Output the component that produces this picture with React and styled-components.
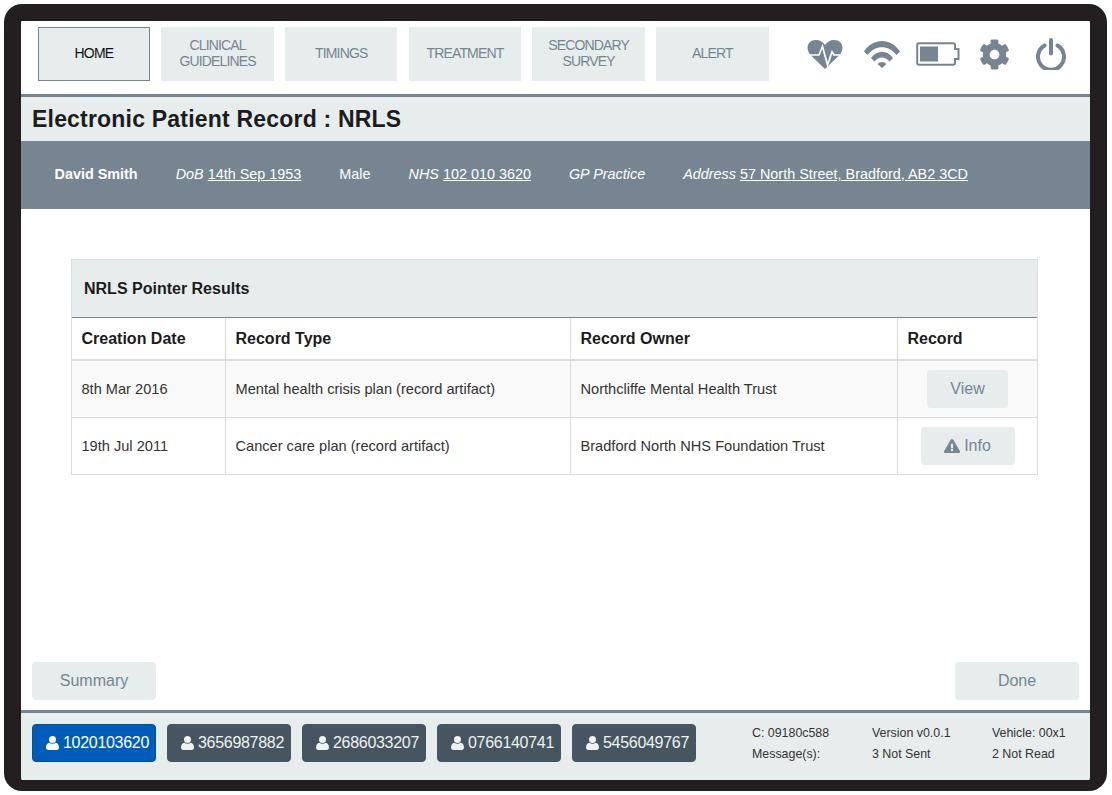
import React from 'react';
import styled, {createGlobalStyle} from 'styled-components';
import {FaCog, FaExclamationTriangle} from 'react-icons/fa';

const GlobalStyle = createGlobalStyle`
  html, body {
    margin: 0;
    padding: 0;
    background: #fff;
    font-family: "Liberation Sans", Arial, sans-serif;
  }
`;

const SLATE = '#768591';
const PALE = '#e7eded';

const Page = styled.div`
  padding: 4px 5px 4px 4px;
  width: 1103px;
  height: 787px;
`;

const Frame = styled.div`
  box-sizing: border-box;
  width: 1103px;
  height: 787px;
  border: 17px solid #231f20;
  border-bottom-width: 11px;
  border-radius: 18px;
  display: flex;
  flex-direction: column;
  background: #fff;
  overflow: hidden;
`;

const TopBar = styled.div`
  height: 73px;
  flex: none;
  display: flex;
  justify-content: space-between;
  padding: 6px 11px 0 16.7px;
  box-sizing: border-box;
`;

const Nav = styled.div`
  display: flex;
  gap: 11.3px;
`;

const NavItem = styled.div`
  box-sizing: border-box;
  width: 112.4px;
  height: 54px;
  padding-bottom: 2px;
  background: ${PALE};
  border: ${p => (p.$active ? `1px solid ${SLATE}` : 'none')};
  color: ${p => (p.$active ? '#111' : SLATE)};
  font-size: 14px;
  letter-spacing: -0.85px;
  line-height: 16px;
  text-align: center;
  display: flex;
  align-items: center;
  justify-content: center;
`;

const StatusIcons = styled.div`
  display: flex;
  align-items: center;
  height: 54px;
  color: ${SLATE};
`;

const IconSlot = styled.div`
  width: ${p => p.$w}px;
  display: flex;
  justify-content: center;
  align-items: center;
`;

const TitleBar = styled.div`
  flex: none;
  height: 47px;
  box-sizing: border-box;
  border-top: 3px solid ${SLATE};
  background: ${PALE};
  padding-left: 11px;
  display: flex;
  align-items: center;
`;

const Title = styled.h1`
  margin: 0;
  font-size: 23px;
  font-weight: 700;
  letter-spacing: 0.2px;
  color: #1c1c1c;
`;

const PatientBar = styled.div`
  flex: none;
  height: 68px;
  padding-bottom: 2px;
  box-sizing: border-box;
  background: ${SLATE};
  color: #fff;
  font-size: 14.4px;
  display: flex;
  align-items: center;
  gap: 38px;
  padding-left: 33.5px;

  em {
    font-style: italic;
  }

  u {
    text-decoration: underline;
  }

  strong {
    font-weight: 700;
  }
`;

const Content = styled.div`
  flex: 1;
  min-height: 0;
  display: flex;
  flex-direction: column;
  padding: 50px 11px 10px 11px;
`;

const Panel = styled.div`
  margin: 0 41px 0 39px;
  width: 967px;
  box-sizing: border-box;
  border: 1px solid #ddd;
`;

const PanelHead = styled.div`
  height: 58px;
  background: ${PALE};
  border-bottom: 1px solid ${SLATE};
  box-sizing: border-box;
  padding-left: 12px;
  display: flex;
  align-items: center;
  font-size: 16px;
  font-weight: 700;
  color: #1c1c1c;
`;

const Row = styled.div`
  display: grid;
  grid-template-columns: 153px 345px 327px 1fr;
  height: ${p => (p.$head ? '43px' : p.$last ? '56px' : '57px')};
  box-sizing: border-box;
  background: ${p => (p.$shade ? '#f9f9f9' : '#fff')};
  border-bottom: ${p => (p.$head ? '2px solid #ddd' : p.$last ? 'none' : '1px solid #ddd')};
  font-size: ${p => (p.$head ? '16px' : '14.6px')};
  font-weight: ${p => (p.$head ? 700 : 400)};
  color: ${p => (p.$head ? '#1c1c1c' : '#333')};
`;

const Cell = styled.div`
  display: flex;
  align-items: center;
  padding-left: 9.5px;
  border-left: ${p => (p.$first ? 'none' : '1px solid #ddd')};
`;

const ActionCell = styled(Cell)`
  padding-left: 0;
  justify-content: center;
`;

const SoftButton = styled.button`
  box-sizing: border-box;
  height: 38px;
  width: ${p => p.$w}px;
  border: none;
  border-radius: 4px;
  background: ${PALE};
  color: ${SLATE};
  font-family: inherit;
  font-size: 16px;
  display: inline-flex;
  align-items: center;
  justify-content: center;
  gap: 4px;
  padding: 0;
`;

const BottomActions = styled.div`
  margin-top: auto;
  display: flex;
  justify-content: space-between;
`;

const Footer = styled.div`
  flex: none;
  height: 70px;
  box-sizing: border-box;
  border-top: 3px solid ${SLATE};
  background: ${PALE};
  padding: 11px 0 0 11px;
  display: flex;
`;

const Patients = styled.div`
  display: flex;
  gap: 11px;
`;

const PatientButton = styled.button`
  box-sizing: border-box;
  width: 124px;
  height: 38px;
  border-radius: 4px;
  border: 1px solid ${p => (p.$active ? '#004f9e' : '#46555f')};
  background: ${p => (p.$active ? '#005cb9' : '#46555f')};
  color: ${p => (p.$active ? '#fff' : '#eef2f2')};
  font-family: inherit;
  font-size: 16px;
  letter-spacing: -0.3px;
  display: inline-flex;
  align-items: center;
  justify-content: flex-start;
  gap: 4px;
  padding: 0 0 0 13px;
  white-space: nowrap;
`;

const Meta = styled.div`
  margin-left: 56px;
  margin-top: -2px;
  display: grid;
  grid-template-columns: 120px 120px 90px;
  grid-auto-rows: 21px;
  font-size: 12.4px;
  color: #333;
  align-items: center;
`;

const HeartBeat = () => (
  <svg width="36" height="30" viewBox="0 0 36 30">
    <path d="M18 30 L3 15.5 C-2 9 1 1 9 1 C13 1 16 3 18 6 C20 3 23 1 27 1 C35 1 38 9 33 15.5 Z" fill="currentColor" />
    <path d="M3 16 H12 L15.5 7.5 L20.5 26 L25 13 L27 16 H33" fill="none" stroke="#fff" strokeWidth="1.7" />
  </svg>
);

const Wifi = () => (
  <svg width="38" height="28" viewBox="0 0 38 28">
    <path d="M1 11.5 C10 -2.5 28 -2.5 37 11.5 L33.5 15 C25.5 4.5 12.5 4.5 4.5 15 Z" fill="currentColor" />
    <path d="M8 18 C14 9.5 24 9.5 30 18 L26.5 21.5 C22 16 16 16 11.5 21.5 Z" fill="currentColor" />
    <path d="M14.5 24 C17 21.3 21 21.3 23.5 24 L19 28 Z" fill="currentColor" />
  </svg>
);

const Battery = () => (
  <svg width="44" height="24" viewBox="0 0 44 24">
    <path d="M3 1.2 H37 Q39 1.2 39 3 V7 H42.5 V17 H39 V21 Q39 22.8 37 22.8 H3 Q1.2 22.8 1.2 21 V3 Q1.2 1.2 3 1.2 Z" fill="none" stroke="currentColor" strokeWidth="2" />
    <rect x="4" y="4.5" width="18" height="15" fill="currentColor" />
  </svg>
);

const Power = () => (
  <svg width="30" height="32" viewBox="0 0 30 32">
    <path d="M8.5 7.5 A13 13 0 1 0 21.5 7.5" fill="none" stroke="currentColor" strokeWidth="4" strokeLinecap="round" />
    <line x1="15" y1="2" x2="15" y2="15.5" stroke="currentColor" strokeWidth="4" strokeLinecap="round" />
  </svg>
);

const UserIcon = () => (
  <svg width="13" height="14" viewBox="0 0 13 14">
    <circle cx="6.5" cy="3.6" r="3.5" fill="currentColor" />
    <path d="M0 11.6 C0 9 1.3 6.8 3.3 6.8 C4.9 8 8.1 8 9.7 6.8 C11.7 6.8 13 9 13 11.6 C13 13.1 12 14 10.7 14 H2.3 C1 14 0 13.1 0 11.6 Z" fill="currentColor" />
  </svg>
);

const navItems = [
  ['HOME'],
  ['CLINICAL', 'GUIDELINES'],
  ['TIMINGS'],
  ['TREATMENT'],
  ['SECONDARY', 'SURVEY'],
  ['ALERT'],
];

const records = [
  {date: '8th Mar 2016', type: 'Mental health crisis plan (record artifact)', owner: 'Northcliffe Mental Health Trust'},
  {date: '19th Jul 2011', type: 'Cancer care plan (record artifact)', owner: 'Bradford North NHS Foundation Trust'},
];

const patients = ['1020103620', '3656987882', '2686033207', '0766140741', '5456049767'];

const App = () => {
  return (
    <Page>
      <GlobalStyle />
      <Frame>
        <TopBar>
          <Nav>
            {navItems.map((lines, i) => (
              <NavItem key={lines[0]} $active={i === 0}>
                <span>
                  {lines[0]}
                  {lines[1] && <br />}
                  {lines[1]}
                </span>
              </NavItem>
            ))}
          </Nav>
          <StatusIcons>
            <IconSlot $w={56}><HeartBeat /></IconSlot>
            <IconSlot $w={57}><Wifi /></IconSlot>
            <IconSlot $w={56}><Battery /></IconSlot>
            <IconSlot $w={57}><FaCog size={31} /></IconSlot>
            <IconSlot $w={56}><Power /></IconSlot>
          </StatusIcons>
        </TopBar>

        <TitleBar>
          <Title>Electronic Patient Record : NRLS</Title>
        </TitleBar>

        <PatientBar>
          <strong>David Smith</strong>
          <span><em>DoB</em> <u>14th Sep 1953</u></span>
          <span>Male</span>
          <span><em>NHS</em> <u>102 010 3620</u></span>
          <em>GP Practice</em>
          <span><em>Address</em> <u>57 North Street, Bradford, AB2 3CD</u></span>
        </PatientBar>

        <Content>
          <Panel>
            <PanelHead>NRLS Pointer Results</PanelHead>
            <Row $head>
              <Cell $first>Creation Date</Cell>
              <Cell>Record Type</Cell>
              <Cell>Record Owner</Cell>
              <Cell>Record</Cell>
            </Row>
            {records.map((r, i) => (
              <Row key={r.date} $shade={i === 0} $last={i === records.length - 1}>
                <Cell $first>{r.date}</Cell>
                <Cell>{r.type}</Cell>
                <Cell>{r.owner}</Cell>
                <ActionCell>
                  {i === 0
                    ? <SoftButton $w={81}>View</SoftButton>
                    : <SoftButton $w={94}><FaExclamationTriangle size={16} /> Info</SoftButton>}
                </ActionCell>
              </Row>
            ))}
          </Panel>
          <BottomActions>
            <SoftButton $w={124}>Summary</SoftButton>
            <SoftButton $w={124}>Done</SoftButton>
          </BottomActions>
        </Content>

        <Footer>
          <Patients>
            {patients.map((p, i) => (
              <PatientButton key={p} $active={i === 0}>
                <UserIcon /> {p}
              </PatientButton>
            ))}
          </Patients>
          <Meta>
            <span>C: 09180c588</span>
            <span>Version v0.0.1</span>
            <span>Vehicle: 00x1</span>
            <span>Message(s):</span>
            <span>3 Not Sent</span>
            <span>2 Not Read</span>
          </Meta>
        </Footer>
      </Frame>
    </Page>
  );
};

App.displayName = 'App';
export default App;
